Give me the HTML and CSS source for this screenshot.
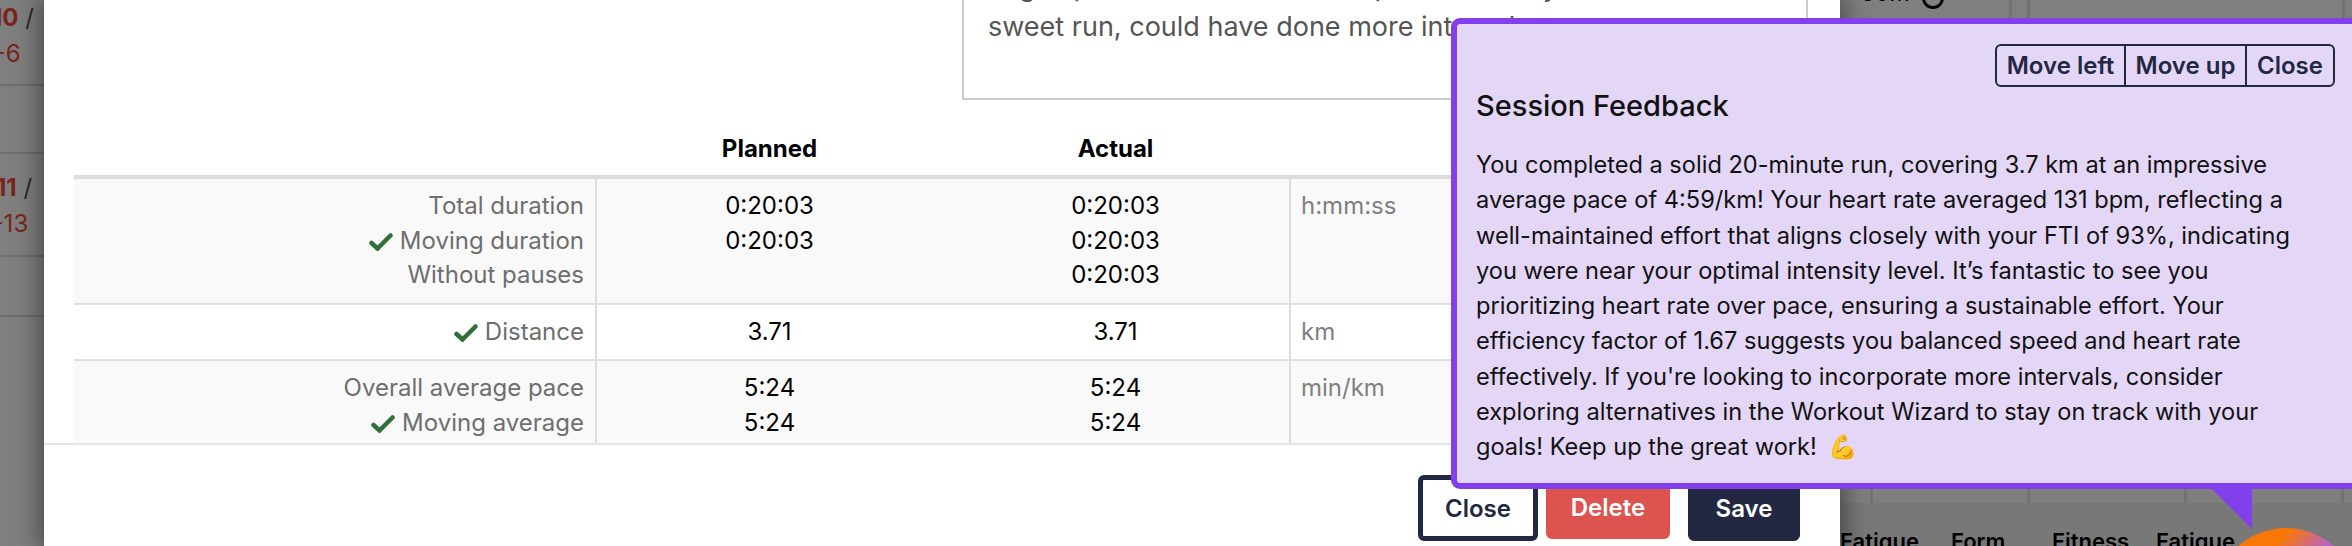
FILE: index.html
```html
<!DOCTYPE html>
<html lang="en">
<head>
<meta charset="utf-8">
<title>Session</title>
<link rel="stylesheet" href="styles.css">
</head>
<body>
<div class="page">
  <div class="cal-left">
    <div class="cal-cell cell-a"><div class="week"><b>10</b> /</div><div class="range">5-6</div></div>
    <div class="cal-cell cell-b"></div>
    <div class="cal-cell cell-c"><div class="week"><b>11</b> /</div><div class="range">7-13</div></div>
    <div class="cal-cell cell-d"></div>
  </div>
  <div class="cal-right">
    <div class="top-row">
      <div class="top-a"><span class="dur">50m</span><span class="info"></span></div>
      <div class="top-b"></div>
      <div class="top-c"></div>
    </div>
    <div class="mid-row">
      <div class="m1"></div><div class="m2"></div><div class="m3"></div><div class="m4"></div><div class="m5"></div>
    </div>
    <div class="labels">
      <span class="l1">Fatigue</span><span class="l2">Form</span><span class="l3">Fitness</span><span class="l4">Fatigue</span>
    </div>
  </div>
</div>
<div class="backdrop"></div>
<div class="coach-orb"><div class="orb-disc"></div></div>

<section class="modal">
  <div class="modal-body">
    <div class="notes-row">
      <div class="notes">
        <p class="notes-clip">Legs up and the hill was not a problem today</p>
        <p>sweet run, could have done more intervals</p>
      </div>
    </div>
    <div class="tbl">
      <div class="thead">
        <div></div>
        <div class="th">Planned</div>
        <div class="th">Actual</div>
        <div></div>
      </div>
      <div class="tr shade">
        <div class="td label"><div>Total duration</div><div><svg class="chk" viewBox="0 0 24 18"><path d="M2.5 10 L8.5 15.5 L21.5 2.5"/></svg>Moving duration</div><div>Without pauses</div></div>
        <div class="td val"><div>0:20:03</div><div>0:20:03</div></div>
        <div class="td val"><div>0:20:03</div><div>0:20:03</div><div>0:20:03</div></div>
        <div class="td unit">h:mm:ss</div>
      </div>
      <div class="tr">
        <div class="td label"><div><svg class="chk" viewBox="0 0 24 18"><path d="M2.5 10 L8.5 15.5 L21.5 2.5"/></svg>Distance</div></div>
        <div class="td val"><div>3.71</div></div>
        <div class="td val"><div>3.71</div></div>
        <div class="td unit">km</div>
      </div>
      <div class="tr shade">
        <div class="td label"><div>Overall average pace</div><div><svg class="chk" viewBox="0 0 24 18"><path d="M2.5 10 L8.5 15.5 L21.5 2.5"/></svg>Moving average</div></div>
        <div class="td val"><div>5:24</div><div>5:24</div></div>
        <div class="td val"><div>5:24</div><div>5:24</div></div>
        <div class="td unit">min/km</div>
      </div>
    </div>
  </div>
  <footer class="modal-foot">
    <button class="btn btn-close">Close</button>
    <button class="btn btn-delete">Delete</button>
    <button class="btn btn-save">Save</button>
  </footer>
</section>

<aside class="pop">
  <div class="pop-tools">
    <button class="tool">Move left</button><button class="tool">Move up</button><button class="tool">Close</button>
  </div>
  <h2 class="pop-title">Session Feedback</h2>
  <p class="pop-text">You completed a solid 20-minute run, covering 3.7 km at an impressive average pace of 4:59/km! Your heart rate averaged 131 bpm, reflecting a well-maintained effort that aligns closely with your FTI of 93%, indicating you were near your optimal intensity level. It’s fantastic to see you prioritizing heart rate over pace, ensuring a sustainable effort. Your efficiency factor of 1.67 suggests you balanced speed and heart rate effectively. If you're looking to incorporate more intervals, consider exploring alternatives in the Workout Wizard to stay on track with your goals! Keep up the great work! <span class="emoji">💪</span></p>
  <svg class="pop-tail" viewBox="0 0 40 40"><path d="M0 0 H40 V40 Z"/></svg>
</aside>
</body>
</html>
```
FILE: styles.css
```css
* { box-sizing: border-box; }
html, body { margin: 0; padding: 0; width: 2352px; height: 546px; overflow: hidden; background: #fff; }
body { position: relative; font-family: Inter, "Noto Sans", sans-serif; font-size: 24px; color: #111; }

.page { display: flex; justify-content: space-between; height: 546px; overflow: hidden; }
.cal-left { width: 60px; overflow: hidden; }
.cal-cell { border-bottom: 2px solid #ddd; }
.cell-a { height: 86px; padding-top: 0; }
.cell-b { height: 68px; }
.cell-c { height: 103px; padding-top: 16px; }
.cell-d { height: 60px; }
.week { margin-left: -8px; white-space: nowrap; line-height: 36px; color: #555; font-size: 24px; }
.cell-c .week { margin-left: -4px; }
.week b { color: #f04a38; font-weight: 700; }
.range { margin-left: -20px; white-space: nowrap; line-height: 36px; color: #f04a38; font-size: 24px; }
.cell-c .range { margin-left: -21px; }

.cal-right { width: 512px; display: flex; flex-direction: column; }
.top-row { display: flex; height: 30px; }
.top-a { width: 172px; padding-left: 21px; border-right: 3px solid #e4e4e4; line-height: 0; white-space: nowrap; }
.dur { display: inline-block; line-height: 1; margin-top: -18px; font-size: 23px; color: #000; vertical-align: top; }
.info { display: inline-block; width: 22px; height: 22px; border: 3px solid #000; border-radius: 50%; margin: -13px 0 0 12px; vertical-align: top; }
.top-b { width: 18px; border-right: 3px solid #e4e4e4; }
.top-c { width: 315px; border-right: 3px solid #e4e4e4; }
.mid-row { display: flex; height: 473px; }
.m1 { width: 33px; border-right: 3px solid #e4e4e4; }
.m2, .m3, .m4 { width: 157px; border-right: 3px solid #e4e4e4; }
.m5 { flex: 1; }
.labels { height: 43px; background: #f0f0f0; padding-top: 25px; overflow: hidden; white-space: nowrap; font-size: 22px; font-weight: 600; line-height: 26px; color: #000; display: flex; }
.labels span { display: block; }
.l1 { width: 111px; }
.l2 { width: 101px; }
.l3 { width: 104px; }

.backdrop { position: absolute; inset: 0; background: rgba(0, 0, 0, 0.5); }
.coach-orb { position: absolute; left: 2214px; top: 528px; width: 138px; height: 18px; overflow: hidden; }
.orb-disc { width: 144px; height: 144px; border-radius: 50%; background: linear-gradient(135deg, #f97706 0 27%, #b865c0 45%, #a855c7 100%); }

.modal { position: absolute; left: 44px; top: 0; width: 1796px; height: 546px; background: #fff; box-shadow: 0 0 24px 4px rgba(0, 0, 0, 0.45); display: flex; flex-direction: column; }
.modal-body { height: 443px; padding: 0 32px 0 30px; overflow: hidden; flex: none; }
.notes-row { display: flex; justify-content: flex-end; height: 100px; }
.notes { width: 846px; height: 100px; border: 2px solid #ccc; border-top: 0; padding: 0 24px; font-size: 27px; color: #555; line-height: 40.5px; overflow: hidden; }
.notes p { margin: 0; white-space: nowrap; }
.notes-clip { margin-top: -33.5px !important; height: 40.5px; }
.notes-row + .tbl { margin-top: 21px; }

.thead { display: grid; grid-template-columns: 523px 345px 347px 1fr; height: 58px; border-bottom: 4px solid #ddd; }
.th { text-align: center; font-weight: 700; font-size: 24px; line-height: 56px; color: #000; }
.tr { display: grid; grid-template-columns: 523px 345px 347px 1fr; border-bottom: 2px solid #e0e0e0; }
.shade { background: #f9f9f9; }
.td { padding: 10px 11px 10px; line-height: 34.5px; }
.label { text-align: right; color: #6e6e6e; border-right: 2px solid #ddd; }
.val { text-align: center; color: #000; }
.unit { color: #808080; border-left: 2px solid #ddd; padding-left: 10px; }
.chk { width: 24px; height: 18px; margin-right: 7px; vertical-align: -2px; }
.chk path { fill: none; stroke: #2f6f3a; stroke-width: 4.5; stroke-linecap: round; stroke-linejoin: miter; }

.modal-foot { flex: none; height: 103px; border-top: 2px solid #e5e5e5; display: flex; justify-content: flex-end; align-items: flex-start; gap: 8px; padding: 30px 40px 0 0; }
.btn { height: 66px; font: 600 24px Inter, sans-serif; border-radius: 6px; border: 5px solid #222842; padding: 0; }
.btn-close { width: 120px; background: #fff; color: #222842; }
.btn-delete { width: 124px; height: 64px; background: #dc5350; border: 0; color: #fff; margin-right: 10px; }
.btn-save { width: 112px; background: #222842; color: #fff; }

.pop { position: absolute; left: 1451px; top: 18px; width: 901px; height: 471px; background: #e4d6f7; border: 6px solid #823fec; border-right-width: 0; border-radius: 9px 0 0 9px; padding: 20px 32px 0 19px; }
.pop-tools { position: absolute; right: 17px; top: 20px; display: flex; height: 43px; border: 2.5px solid #222842; border-radius: 6px; }
.tool { background: transparent; border: 0; padding: 0; font: 600 24px Inter, sans-serif; color: #222842; border-left: 2.5px solid #222842; }
.tool:first-child { border-left: 0; }
.tool:nth-child(1) { width: 127px; }
.tool:nth-child(2) { width: 121px; }
.tool:nth-child(3) { width: 88px; }
.pop-title { margin: 45px 0 0; font-size: 29px; font-weight: 500; line-height: 34px; color: #111; }
.pop-text { margin: 24px 0 0; font-size: 23.6px; line-height: 35.25px; color: #111; }
.emoji { margin-left: 4px; }
.pop-tail { position: absolute; left: 755px; top: 465px; width: 40px; height: 40px; overflow: visible; }
.pop-tail path { fill: #823fec; }
```
